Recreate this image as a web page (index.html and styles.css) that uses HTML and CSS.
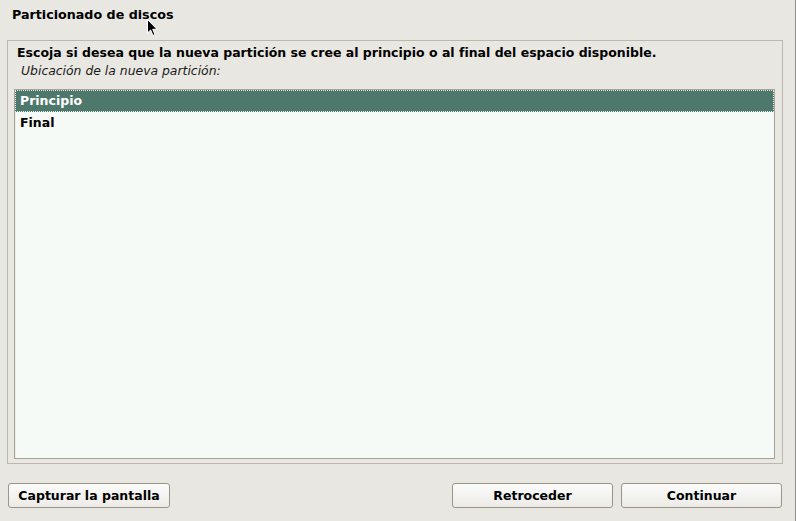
FILE: index.html
```html
<!DOCTYPE html>
<html lang="es">
<head>
<meta charset="utf-8">
<title>Particionado de discos</title>
<link rel="stylesheet" href="styles.css">
</head>
<body>
<div class="window">
  <header class="title">Particionado de discos</header>
  <section class="panel">
    <p class="question">Escoja si desea que la nueva partición se cree al principio o al final del espacio disponible.</p>
    <p class="label">Ubicación de la nueva partición:</p>
    <ul class="list">
      <li class="item selected">Principio</li>
      <li class="item">Final</li>
    </ul>
  </section>
  <footer class="buttons">
    <button class="btn">Capturar la pantalla</button>
    <span class="spacer"></span>
    <button class="btn">Retroceder</button>
    <button class="btn">Continuar</button>
  </footer>
  <svg class="cursor" width="12" height="19" viewBox="0 0 12 19"><path d="M0.5 0.5 L0.5 14 L3.6 11 L6 16.5 L8 15.6 L5.7 10.3 L10 10.3 Z" fill="#000" stroke="#fff" stroke-width="1"/></svg>
</div>
</body>
</html>
```
FILE: styles.css
```css
* { box-sizing: border-box; }
html, body { margin: 0; padding: 0; }
body {
  width: 796px;
  height: 521px;
  background: #e8e7e1;
  font-family: "DejaVu Sans", sans-serif;
  overflow: hidden;
}
.window {
  position: relative;
  width: 796px;
  height: 521px;
  border-right: 1px solid #8e8e8a;
  display: flex;
  flex-direction: column;
}
.title {
  font-weight: bold;
  font-size: 12.7px;
  height: 40px;
  padding: 7px 0 0 12px;
  color: #000;
}
.panel {
  margin-left: 7px;
  width: 776px;
  height: 424px;
  border: 1px solid #bcb8ae;
  display: flex;
  flex-direction: column;
  padding: 0 7px 4px 6px;
}
.question {
  margin: 4px 0 0 3px;
  font-weight: bold;
  font-size: 12.5px;
  line-height: 16px;
}
.label {
  margin: 2px 0 0 7px;
  font-style: italic;
  font-size: 12.4px;
  line-height: 16px;
  color: #1a1a1a;
}
.list {
  list-style: none;
  margin: 10px 0 0 0;
  padding: 0;
  flex: 1;
  background: #f6faf7;
  border: 1px solid #a9a192;
  box-shadow: inset 1px 1px 0 #f0ede6;
}
.item {
  font-weight: bold;
  font-size: 12.5px;
  height: 22px;
  line-height: 21px;
  padding-left: 5px;
}
.item.selected {
  background: #4f786c;
  color: #fff;
  outline: 1px dotted #e8efe8;
  outline-offset: -1px;
}
.buttons {
  display: flex;
  align-items: center;
  padding: 19px 13px 0 8px;
  gap: 8px;
}
.spacer { flex: 1; }
.btn {
  width: 161px;
  height: 25px;
  font-family: "DejaVu Sans", sans-serif;
  font-weight: bold;
  font-size: 12.5px;
  line-height: 22px;
  color: #000;
  border: 1px solid #9c9586;
  border-radius: 3px;
  background: linear-gradient(#fbfbfa, #ecebe7);
  padding: 0;
}
.btn:first-child { width: 162px; }
.cursor {
  position: absolute;
  left: 147px;
  top: 19px;
}
```
